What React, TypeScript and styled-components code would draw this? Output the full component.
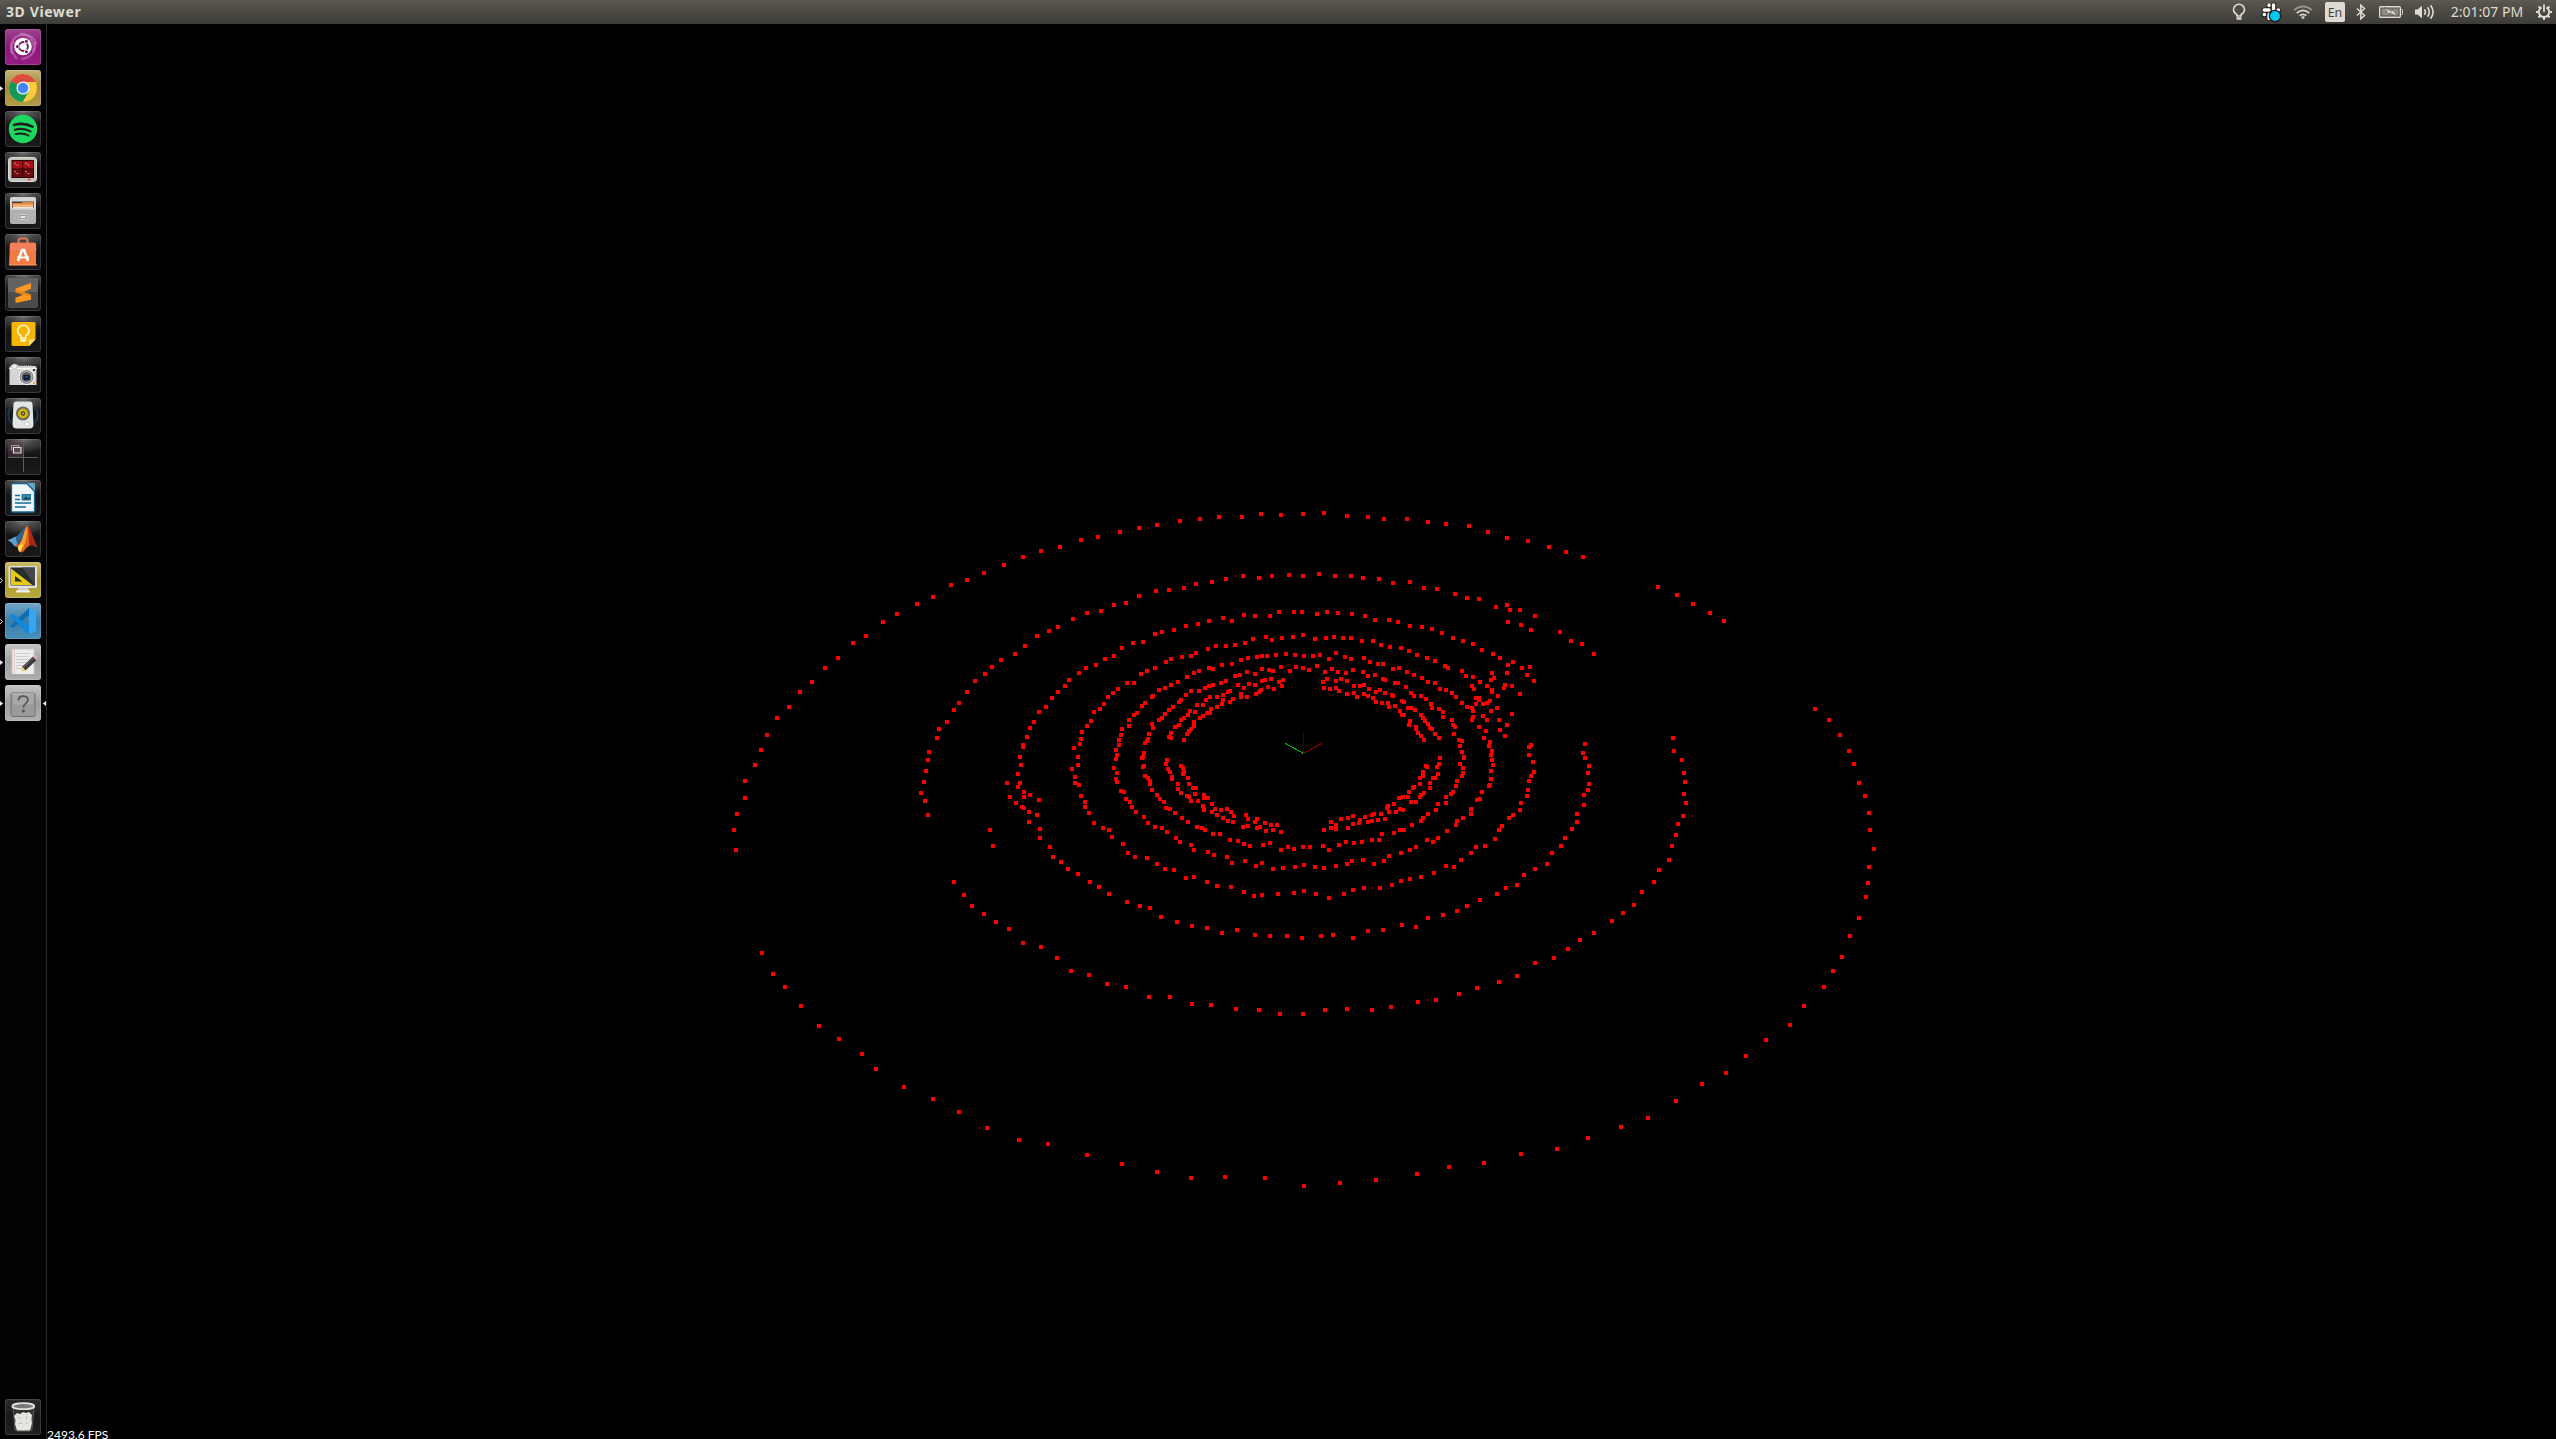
import React from "react";
import styled, { createGlobalStyle } from "styled-components";

const GlobalStyle = createGlobalStyle`
  html, body { margin: 0; padding: 0; background: #000; overflow: hidden; }
  * { box-sizing: border-box; }
`;

const Desktop = styled.div`
  display: flex;
  flex-direction: column;
  width: 2556px;
  height: 1439px;
  background: #000;
  font-family: "Noto Sans", "Open Sans", sans-serif;
`;

const TopPanel = styled.header`
  display: flex;
  justify-content: space-between;
  align-items: center;
  flex: none;
  height: 24px;
  padding: 0 4px 0 6px;
  background: linear-gradient(#5e5b50 0, #56544b 3px, #3d3c38 100%);
  color: #dfdbd2;
`;

const WindowTitle = styled.span`
  font-family: "Noto Sans", sans-serif;
  font-weight: 700;
  font-size: 14px;
  line-height: 24px;
  letter-spacing: 0.6px;
`;

const Indicators = styled.div`
  display: flex;
  align-items: center;
  height: 24px;
`;

const Slot = styled.div<{ $width: number; $gap: number }>`
  display: flex;
  align-items: center;
  justify-content: center;
  width: ${(p) => p.$width}px;
  height: 24px;
  margin-left: ${(p) => p.$gap}px;
  svg { display: block; overflow: visible; }
`;

const Keyboard = styled.span`
  width: 20px;
  height: 20px;
  border-radius: 2px;
  background: #dfdbd2;
  color: #45433e;
  font-size: 12.5px;
  line-height: 21px;
  text-align: center;
`;

const Clock = styled.span`
  font-size: 14px;
  line-height: 24px;
  white-space: nowrap;
`;

const Workspace = styled.div`
  display: flex;
  flex: 1;
  min-height: 0;
`;

const Launcher = styled.nav`
  display: flex;
  flex-direction: column;
  justify-content: space-between;
  width: 47px;
  padding: 5px 0 4px;
  background: #030103;
  border-right: 1px solid #2b2a2b;
`;

const LauncherList = styled.div`
  display: flex;
  flex-direction: column;
  gap: 5px;
`;

const LauncherRow = styled.div`
  display: grid;
  grid-template-columns: 5px 36px 5px;
  align-items: center;
  height: 36px;
  svg { display: block; }
`;

const EndMark = styled.span`
  display: flex;
  justify-content: flex-end;
`;

const Tile = styled.div<{ $fill: string }>`
  width: 36px;
  height: 36px;
  border-radius: 3px;
  background: ${(p) => p.$fill};
  box-shadow: inset 0 0 0 1px rgba(255, 255, 255, 0.13);
`;

const Viewer = styled.main`
  display: flex;
  flex-direction: column;
  justify-content: flex-end;
  flex: 1;
  background: #000;
`;

const Scene = styled.svg`
  display: block;
  flex: none;
  width: 2509px;
  height: 1402px;
`;

const FrameRate = styled.div`
  flex: none;
  height: 13px;
  color: #fff;
  font-family: Lato, sans-serif;
  font-size: 12px;
  line-height: 17px;
  white-space: nowrap;
`;

/* ---------- point cloud ---------- */

type Sector = { x: number; y: number; sx: number; sy: number; points: string };

const sectors: Sector[] = [
  {
    x: 720, y: 500, sx: 3, sy: 3,
    points: `1200,96 1134,111 1083,120 1020,141 963,153 909,171 852,195 792,219 741,240 693,255 639,291 591,312 531,342 489,366 438,408 399,429 354,474 315,504 276,546 240,576 207,621 171,654 141,705 123,750 105,795 75,843 75,894 51,942 42,990 48,1050
    1218,309 1182,315 1143,333 1101,339 1059,357 1014,381 987,393 951,408 915,438 885,462 843,480 816,501 795,522 765,543 741,576 717,609 702,630 681,666 657,687 651,714 627,756 624,780 618,813 612,846 603,879 615,903 624,945
    1206,444 1182,468 1155,477 1128,495 1098,504 1077,519 1047,540 1035,558 1014,576 996,594 978,621 957,636 942,666 930,684 921,711 909,735 909,741 900,771 903,795 894,822 900,849 894,861 861,849 912,876 912,891 930,885 957,900 870,891 888,909 906,921 912,924 927,936 951,945 927,966 960,987 960,1014 990,1041 999,1071 810,990 819,1038
    1221,549 1194,567 1179,579 1164,591 1152,612 1140,627 1122,636 1113,663 1101,678 1086,696 1083,717 1080,732 1062,744 1074,771 1074,795 1056,807 1065,831 1065,849 1077,855 1083,888 1095,906 1095,921 1107,939 1122,969 1149,984 1167,990 1176,1011 1209,1032 1224,1059
    1227,660 1227,678 1206,687 1203,705 1197,720 1197,735 1188,750 1191,765 1188,777 1182,804 1191,819 1188,837 1191,846 1203,873 1212,876 1218,897 1230,906`,
  },
  {
    x: 1130, y: 500, sx: 3, sy: 3,
    points: `27,84 81,75 150,63 210,57 267,51 336,51 393,42 453,45 519,42 582,39 651,48 714,51 762,57 831,57 894,66 948,72 1017,78 1074,96 1131,114 1194,123 1257,141 1308,156
    27,288 78,273 117,270 162,264 198,252 246,246 288,237 339,228 387,234 426,228 477,225 519,228 567,222 615,228 663,228 699,234 747,237 789,249 840,246 882,264 921,267 975,282 1011,294 1047,297 1098,321 1131,315 1140,330 1170,330 1215,348 1134,366 1173,375 1203,390 1290,396
    9,429 39,426 75,402 96,396 132,390 168,378 204,372 237,363 279,354 306,363 342,345 375,348 420,348 447,336 492,336 516,336 561,342 591,336 624,339 666,342 705,348 735,360 777,360 804,366 840,378 876,381 906,387 936,399 969,414 999,423 1029,432 1056,450 1089,462 1110,474 1149,486 1134,495 1176,504 1200,501 1191,525 1212,543 1131,519
    12,549 33,522 51,513 75,504 108,486 123,477 156,471 183,468 198,459 234,447 258,438 288,438 315,435 345,429 369,417 408,411 426,420 456,414 489,411 519,405 555,417 588,414 612,411 639,414 663,414 696,423 729,423 753,435 780,441 813,444 837,453 861,465 891,474 915,483 945,498 954,504 996,513 1008,528 1029,531 1050,546 1071,558 1086,570 1086,576 1104,588 1086,519 1092,534 1083,540 1125,555 1122,564 1146,558 1170,582 1026,558 1032,567 1038,594 1047,594 1047,600 1038,612 1059,612 1071,609 1080,603 1026,624 1029,633 1083,633 1101,624 1146,642 1059,648 1029,651 1026,660 1071,660 1107,660 1047,681 1068,693 1110,690 1131,675 1125,708 1062,714 1080,726 1077,738 1086,753 1083,765 1086,780 1089,795 1083,813 1083,837 1080,855 1077,858 1056,876 1050,897 1041,900 1023,927 1023,942 999,954 981,963 978,975 951,993 924,1014 909,1026 891,1020 858,1041 840,1050 813,1059 777,1068
    12,645 21,639 36,618 45,609 66,591 69,588 87,570 105,564 123,555 144,546 171,531 192,519 207,513 237,504 249,507 276,495 306,492 333,480 354,474 381,471 396,468 411,468 438,465 468,462 495,465 522,468 549,468 570,465 597,477 618,459 645,471 663,477 702,474 720,486 744,492 759,492 789,507 807,504 831,516 852,525 876,534 894,546 915,549 930,567 948,570 966,579 978,591 996,609 1011,621
    66,672 69,684 57,702 54,717 51,723 45,729 42,759 39,771 36,774 42,798 39,801 45,828 54,834 60,843 60,852 66,870 81,885 90,897 102,906 108,924 120,927 135,939 156,954 174,966 201,981 216,984 225,990 249,1002 270,1002 300,1020 324,1023 342,1032 360,1038 399,1035 420,1029 453,1050 474,1041 492,1047 519,1041 540,1041 579,1038 597,1050 627,1035 648,1026 672,1029 696,1026 726,1020 747,1020 756,1002 792,999 810,990 822,990 846,975 873,963 879,954 894,942 918,930 924,912 948,909 948,891 963,882 969,876 978,858 981,843 996,828 999,819 999,804 990,792 1002,774 1002,771 996,756 990,738 996,723 987,720 972,702 975,681 969,675 966,660 939,651 939,636 927,627 906,624 903,612 888,597 873,588 852,588 843,579 828,561 804,549 795,549 765,540 759,537 735,525 714,528 699,516 669,510 648,519 624,516 606,507 585,516 561,498 537,510 519,504 498,501 480,513 453,501 429,513 417,510 396,507 375,522 351,516 330,525 315,528 288,543 273,549 249,555 237,558 225,564 207,573 183,573 168,585 153,600 147,606 129,621 117,630 105,642 96,654 87,660
    459,540 447,546 456,558 432,567 414,561 423,537 405,540 396,543 375,555 357,552 342,564 324,555 393,570 387,576 378,582 351,591 333,591 333,582 309,597 300,606 300,573 294,576 279,585 261,591 240,591 228,600 219,615 201,615 279,600 276,612 261,621 243,627 240,639 231,639 219,648 210,654 195,636 180,633 174,645 162,654 153,660 147,675 135,681 123,699 117,711 123,714 192,666 192,678 183,687 177,693 171,702 162,720
    579,546 591,537 618,543 633,537 651,543 672,558 690,558 702,555 717,567 738,576 750,570 765,579 786,585 789,588 816,603 822,606 834,624 843,624 855,630 873,645 879,654 885,663 894,672 900,684 906,687 915,702 927,714 582,564 600,567 618,564 627,573 651,582 672,579 681,591 702,582 714,588 729,594 738,606 756,609 774,609 777,621 795,618 810,633 816,645 822,645 840,663 837,675 858,681 858,687 864,699 873,708 882,720
    111,780 108,792 114,807 120,816 126,831 126,837 144,852 144,867 153,879 171,888 177,891 183,903 204,903 195,882 219,918 222,930 246,936 261,945 279,954 294,963 309,966 339,981 354,978 381,984 390,981 408,993 429,990 453,996 153,798 159,804 162,816 159,822 174,834 177,852 189,864 198,864 222,885 222,894 234,894 246,912 255,927 273,930 291,927 303,936 312,948 348,945 354,957 375,966 381,957 405,969 423,975 441,975
    582,990 603,984 603,966 618,975 618,987 633,957 654,954 669,948 654,984 669,972 687,969 690,960 705,951 726,945 732,942 753,942 714,966 726,963 744,960 765,957 777,936 771,924 774,918 792,912 798,936 810,927 819,930 807,894 819,891 834,891 837,876 843,906 858,906 849,864 852,861 870,852 870,834 879,828 879,816 891,801 888,798 870,891 873,885 882,879 900,864 900,849 909,834 915,834 924,822 921,801 927,792 930,774
    6,921 18,936 42,951 54,969 75,981 96,984 111,996 138,1014 150,1026 183,1035 192,1050 234,1056 252,1065 291,1071 15,1071 51,1074
    1203,735 1197,741 1197,765 1209,786 1212,816 1203,828 1197,843 1194,870 1191,888 1173,909 1170,930 1149,945 1137,954 1116,978 1107,990 1095,1017 1065,1038 1038,1041 1023,1059 1305,1014 1293,1038 1266,1059`,
  },
  {
    x: 1540, y: 540, sx: 3, sy: 3,
    points: `129,51 354,141 411,165 459,192 510,219 552,243 93,303 126,312 162,342 825,507 867,540 900,585 927,633 942,672 957,729 975,768 987,819 990,870 1002,927 987,981 984,1029 978,1071 957,1134 930,1188 906,1251 879,1293 852,1341
    399,594 402,633 426,660 432,699 435,726 432,762 438,789 429,828 414,852 408,885 396,918 387,960 357,990 342,1026 306,1056 282,1095 249,1119 216,1143 162,1179 120,1200 84,1227 42,1254
    135,612 129,639 135,654 147,678 144,699 147,732 144,750 132,765 132,795 111,822 111,846 96,867 21,972`,
  },
  {
    x: 720, y: 850, sx: 2.8, sy: 3,
    points: `954,36 974,57 1002,72 1036,96 1061,111 1089,132 1139,156 1176,168 1204,174 1234,201 1279,216 1321,228 1363,234 1405,249 1447,240 1498,255 1540,258
    1223,42 1246,57 1271,60 1304,84 1327,81 1363,96 1391,108 1430,111 1467,126 1495,138 1517,135 1433,39 1470,33 1500,48 1517,39
    655,96 683,135 705,168 739,192 772,216 809,237 848,279 898,291 943,324 982,363 1033,375 1083,402 1136,411 1201,441 1260,441 1321,462 1374,465 1444,477 1509,480
    117,309 148,372 182,411 226,468 277,528 333,567 397,612 436,657 515,711 596,747 669,786 747,834 837,870 918,882 1027,915 1125,942 1223,966 1318,984 1413,981 1525,984`,
  },
  {
    x: 1270, y: 850, sx: 2.529, sy: 3,
    points: `8,57 33,54 63,51 86,45 114,51 137,54 167,48 195,42 207,33 235,30 263,42 288,33
    20,132 61,129 86,123 116,132 149,144 187,132 210,120 238,114 278,114 308,105 331,93 354,87 382,81 415,69 445,48 465,51 483,30
    43,258 81,264 129,258 159,255 210,264 248,243 286,240 334,225 369,231 400,204 437,195 473,183 498,168 531,150 574,132 597,114 625,105 642,75 670,57
    25,492 83,492 139,480 195,477 258,480 306,471 374,456 420,450 478,432 523,414 579,396 625,378 670,339
    86,1008 177,999 268,990 372,972 453,951 541,939 635,912 726,897 804,864 888,831 956,804 1027,753 1092,702 1153,669 1204,618 1254,570 1315,525 1350,468`,
  },
];

const POINT_SIZE = 4;

const cloudPath = sectors
  .map((s) =>
    s.points
      .trim()
      .split(/\s+/)
      .map((pair) => {
        const [px, py] = pair.split(",").map(Number);
        const x = Math.round(s.x + px / s.sx) - POINT_SIZE / 2;
        const y = Math.round(s.y + py / s.sy) - POINT_SIZE / 2;
        return `M${x} ${y}h${POINT_SIZE}v${POINT_SIZE}h-${POINT_SIZE}z`;
      })
      .join("")
  )
  .join("");

const PointCloud = () => (
  <Scene viewBox="47 24 2509 1402" shapeRendering="crispEdges">
    <path d="M1303.5 753.5L1285.5 743.5" stroke="#00b400" />
    <path d="M1303.5 753.5L1321.5 743.5" stroke="#a80000" />
    <path d="M1303.5 732v21" stroke="#0000b8" />
    <path d={cloudPath} fill="#f00" />
  </Scene>
);

/* ---------- launcher artwork ---------- */

const dark =
  "radial-gradient(ellipse 24px 14px at 50% 0, #737373 0, #484848 45%, rgba(40,40,40,0) 100%), linear-gradient(#363636 0, #151415 45%, #1b1a1c 100%)";
const grey = "linear-gradient(#c4c4c4, #9f9f9f 50%, #b0b0b0)";

const art: Record<string, React.ReactNode> = {
  dash: (
    <>
      <g fill="none" stroke="#d9a7d2" strokeOpacity=".4" strokeWidth="2.2">
        <path d="M7 25C3 13 10 5 20 6c6 0 10 4 11 9" />
        <path d="M12 30c-5-5-7-12-3-18" />
        <path d="M15 5c9-1 16 8 13 18" />
        <path d="M30 13c2 9-4 16-14 17" />
      </g>
      <circle cx="18" cy="17.5" r="8.8" fill="#fff" />
      <circle cx="18.4" cy="17.5" r="4.5" fill="none" stroke="#6b1a5c" strokeWidth="1.9" />
      <circle cx="12.6" cy="17.5" r="2.2" fill="#fff" />
      <circle cx="21.2" cy="12.6" r="2.2" fill="#fff" />
      <circle cx="21.2" cy="22.4" r="2.2" fill="#fff" />
      <circle cx="12.4" cy="17.5" r="1.5" fill="#6b1a5c" />
      <circle cx="21.4" cy="12.3" r="1.5" fill="#6b1a5c" />
      <circle cx="21.4" cy="22.7" r="1.5" fill="#6b1a5c" />
    </>
  ),
  chrome: (
    <>
      <circle cx="18" cy="18" r="14" fill="#fdc83b" />
      <path d="M18 18L5.9 11A14 14 0 0 0 17.7 32l6.2-10.7z" fill="#129b58" />
      <path d="M18 18L5.9 11A14 14 0 0 1 30.7 12H18z" fill="#dc4b3e" />
      <circle cx="18" cy="18" r="6.6" fill="#e9edf5" />
      <circle cx="18" cy="18" r="5.2" fill="#4285f4" />
    </>
  ),
  spotify: (
    <>
      <circle cx="18" cy="18" r="14.2" fill="#1ed760" />
      <g fill="none" stroke="#17201a" strokeLinecap="round">
        <path d="M9 14c6-1.8 13-1.2 18.5 1.7" strokeWidth="2.6" />
        <path d="M9.8 18.8c5-1.5 11-.9 15.7 1.6" strokeWidth="2.2" />
        <path d="M10.6 23.2c4.3-1.2 9-.7 13 1.4" strokeWidth="1.8" />
      </g>
    </>
  ),
  terminator: (
    <>
      <rect x="3.5" y="5.5" width="28" height="24" rx="3" fill="#c3c3bd" stroke="#deded9" />
      <rect x="6.5" y="8" width="22.5" height="18" fill="#2a0505" />
      <path d="M7.5 9h9.8v7.5H7.5zM18.2 9H28v7.5h-9.8z" fill="#a60f16" />
      <path d="M7.5 17.5h9.8V25H7.5zM18.2 17.5H28V25h-9.8z" fill="#6f080b" />
      <path d="M9 11l2 1M11.5 13h2M20 11l2 1M22.5 13h2M9 19l2 1M11.5 21.5h2M20 19l2 1M22.5 21.5h2" stroke="#f2a4a4" strokeWidth=".8" />
      <path d="M23 27.5h2.500" stroke="#e33" strokeWidth="1.6" />
    </>
  ),
  files: (
    <>
      <path d="M5 6q0-2 2-2h22q2 0 2 2v11H5z" fill="#d4d4d4" />
      <path d="M7 8.5h22V17H7z" fill="#403b36" />
      <path d="M7.5 10h9l1-1h11v8h-21z" fill="#df8a4a" />
      <path d="M8 11.5h20V17H8z" fill="#f4b276" />
      <path d="M8 14h20v3H8z" fill="#eee3d6" />
      <path d="M5 15.5h26V29q0 2-2 2H7q-2 0-2-2z" fill="#b0b0b0" />
      <path d="M5.5 16h25" stroke="#e4e4e4" />
      <rect x="13.5" y="21.5" width="9" height="5" rx="1" fill="#999" stroke="#d0d0d0" />
      <path d="M15.500 24h5" stroke="#fff" strokeWidth="1.5" />
    </>
  ),
  software: (
    <>
      <path d="M13.5 11V7q0-2.5 2.5-2.5h4q2.500 0 2.500 2.500v4" fill="none" stroke="#e0735a" strokeWidth="2.2" />
      <path d="M5 9.5l2-1h22l2 1V31H4z" fill="#f37a3f" />
      <path d="M5 9.5h26l.4 7H4.6z" fill="#f0805b" />
      <path d="M4 31h28" stroke="#ffa46e" />
      <path d="M13 27l4-11h2l4 11" fill="none" stroke="#fff" strokeWidth="2.6" />
      <path d="M12 23.5h12" stroke="#fff" strokeWidth="2" />
    </>
  ),
  sublime: (
    <>
      <rect x="3" y="3" width="30" height="30" rx="2" fill="#4b4b4b" />
      <path d="M3 3h30v14H3z" fill="#626262" />
      <path d="M10.500 13.500L26 8v5.500L18.500 17 26 19.500v5.300L10.500 28v-5.300l7.500-3-7.500-2.400z" fill="#ff9820" />
      <path d="M16 16.300l10 3.200v2l-15.500-4.200v-2.500z" fill="#e88215" />
    </>
  ),
  keep: (
    <>
      <path d="M6.500 7.500q0-1.500 1.500-1.500h21q1.500 0 1.500 1.500V23l-6.500 7H8q-1.500 0-1.500-1.500z" fill="#f6b500" />
      <path d="M24 23.500h6.500L24 30z" fill="#ffe083" />
      <path d="M15.800 22v-2.400c-2-1-3.200-2.700-3.200-4.600a5.700 5.700 0 0 1 11.400 0c0 1.900-1.200 3.600-3.200 4.600V22z" fill="none" stroke="#fff8df" strokeWidth="1.500" />
      <path d="M15.500 24.500h5.700" stroke="#fff8df" strokeWidth="2.500" />
    </>
  ),
  camera: (
    <>
      <path d="M6 9q0-1.500 1.500-1.500h5L14 9h16q1.500 0 1.500 1.500V28h-27V10z" fill="#d5d5d5" />
      <path d="M4 11.500h28" stroke="#f6f6f6" />
      <path d="M15 8.500h11" stroke="#8d8d8d" strokeDasharray="1 1" />
      <circle cx="9.500" cy="9.500" r="2.500" fill="#eee" stroke="#aaa" strokeWidth=".6" />
      <circle cx="21.500" cy="20" r="7.600" fill="#858585" stroke="#f3f3f3" strokeWidth="1.200" />
      <circle cx="21.500" cy="20" r="5.300" fill="#555" stroke="#c4c4c4" strokeWidth="1" />
      <rect x="18.500" y="18" width="6" height="5" fill="#0a1d3c" />
      <path d="M20 20h3" stroke="#3e72a5" />
      <path d="M28 12h2v2h-2z" fill="#333" />
      <path d="M28 25h2v2h-2z" fill="#f0a238" />
    </>
  ),
  speaker: (
    <>
      <path d="M5 10q-4 8 1 15M31 10q4 8-1 15" fill="none" stroke="#1d3557" strokeWidth="2" />
      <path d="M8.500 6q0-2.500 3-2.500h13q3 0 3 2.500l1 20q0 4.500-4 4.500h-13q-4 0-4-4.500z" fill="#e2e5e5" />
      <circle cx="18" cy="15.500" r="7" fill="#6b6860" />
      <circle cx="18" cy="15.500" r="5" fill="#d0b90d" />
      <circle cx="18" cy="15.500" r="2.200" fill="#4d470b" />
      <circle cx="18" cy="15.500" r=".8" fill="#eee" />
      <circle cx="22" cy="26" r="2.200" fill="#fff" stroke="#bbb" strokeWidth=".7" />
    </>
  ),
  workspaces: (
    <>
      <path d="M3 3h15v15H3z" fill="#5a3c4d" fillOpacity=".5" />
      <path d="M18.500 3v30M3 18.500h30" stroke="#5f5b62" />
      <path d="M6.500 11.500v-5h7v2" fill="none" stroke="#a398a0" strokeWidth="1.200" />
      <path d="M8.500 8.500h7.500v5.500H8.500z" fill="#554650" stroke="#ddd6db" strokeWidth="1.200" />
    </>
  ),
  writer: (
    <>
      <path d="M6.500 4.500q0-1 1-1H22l7.500 8V31q0 1-1 1h-21q-1 0-1-1z" fill="#f4f7f9" stroke="#0e6a9d" strokeWidth="1.300" />
      <path d="M22 3h8v8z" fill="#67a5c8" />
      <path d="M22 3.500l7.500 8" stroke="#17618b" />
      <path d="M10 15.500h5M10 19.500h5M10 23h16M10 27h11" stroke="#126d9f" strokeWidth="1.700" />
      <rect x="17" y="14.500" width="8.500" height="5.500" fill="#348bb8" stroke="#126081" strokeWidth=".8" />
      <path d="M18 19.500l3-3 2 2 1.500-1v2z" fill="#123d57" />
    </>
  ),
  matlab: (
    <>
      <path d="M2.500 19.500l8-4 5 4-5 6c-3-1-2-4-8-6z" fill="#5aa2d0" />
      <path d="M10.500 15.500C15 14 17 7 22.500 4.500l-5 13-5 6.500z" fill="#355f91" />
      <path d="M10 25c4-2 7-4 8.500-11C19.500 9 21 5 22.500 4.500c3 1 5 14 10 22-4-3-6-3-8-2-4 2-5 7-8.500 7-2 0-2-6-6-6.500z" fill="#dd5d1e" />
      <path d="M22.500 4.500c3 1 5 14 10 22-4-3-6-3-8-2-1-6 0-14-2-20z" fill="#a9251c" />
      <path d="M22 5c1 8-1 19-6.500 25.500-1 0-1-3-2.500-5C18 20 19 10 22 5z" fill="#f7a32b" />
      <path d="M14 25q3-1 4-3-1 6-3 9-2-1-2-4z" fill="#ffe15d" />
    </>
  ),
  display: (
    <>
      <rect x="3.500" y="4" width="28.500" height="22" rx="1.500" fill="#e0e0dc" />
      <rect x="5.500" y="5.500" width="24.500" height="18" fill="#272d2d" />
      <path d="M17 5.500h13v17z" fill="#424849" />
      <path d="M6 6.500l21.500 16.500H6z" fill="#e6ca12" />
      <path d="M10 14v5.500h7.500z" fill="#282b25" />
      <path d="M13 26h10l1 3H12z" fill="#cfcfca" />
      <rect x="11" y="28.500" width="14" height="2" rx="1" fill="#f4f4ef" />
    </>
  ),
  vscode: (
    <>
      <path d="M5 13l3-2 19 15-3 5z" fill="#0a77c8" />
      <path d="M5 23l19-18 3 5L8 25z" fill="#0d6eb4" />
      <path d="M5 13l3-2 16 13v6.500z" fill="#1089de" />
      <path d="M24 5l7 3.500v19.500l-7 3z" fill="#33a6f5" />
    </>
  ),
  editor: (
    <>
      <path d="M7 5h22v26H7z" fill="#ededed" stroke="#c6c6c6" />
      <path d="M6 31h24" stroke="#868686" />
      <path d="M9.500 5v25" stroke="#ecb6b6" strokeWidth=".7" />
      <path d="M11 9.500h14M11 12.500h12M11 15.500h13M11 18.500h10M11 21.500h8M11 24.500h6" stroke="#ccc" strokeWidth="1" />
      <path d="M17 23L28 12.500l3.500 3.500-11 10.500z" fill="#3a3838" />
      <path d="M18.500 23.500L29 13.500" stroke="#777" />
      <path d="M16 27.500l1.500-4.500 3 3.500z" fill="#ead85c" />
      <path d="M28 12.500l1.500-1.500q2 1 3 3.500L31 16z" fill="#e8a7ce" />
    </>
  ),
  unknown: (
    <>
      <rect x="6" y="8" width="24" height="23.500" rx="2" fill="#9b9b9b" stroke="#6e6e6e" />
      <path d="M7 9h22" stroke="#d0d0d0" />
      <path d="M8 9.500h20v10H8z" fill="#a8a8a8" />
      <path d="M13.500 15.500c0-6 9.500-5.500 9.500-.7 0 3.700-4.700 3.700-4.700 8" fill="none" stroke="#555" strokeWidth="1.700" />
      <circle cx="18.300" cy="26" r="1.500" fill="#555" />
    </>
  ),
  trash: (
    <>
      <path d="M8 8h21l-2 22q-.200 2-2 2H12q-1.800 0-2-2z" fill="#303030" stroke="#777" strokeWidth=".7" />
      <path d="M9 17l3-3 3 1 3-2 3 1 3-1 3 3-.500 4 .500 4-1.500 6-1 1.500H12L10 25l.500-4z" fill="#e6e6e1" />
      <path d="M13 18l3 2M13 25l4-1M22 17l-1 3M23 25l-2-1" stroke="#b9bab5" fill="none" />
      <ellipse cx="18.300" cy="7.200" rx="11" ry="3" fill="#777" stroke="#dfe2df" strokeWidth="1.800" />
    </>
  ),
};

type Mark = "full" | "hollow" | undefined;
type App = { name: string; fill: string; mark?: Mark; focused?: boolean };

const apps: App[] = [
  { name: "dash", fill: "linear-gradient(#9d4590, #8a1678 50%, #961f86)" },
  { name: "chrome", fill: "linear-gradient(#c6b477, #a18a3b 45%, #b39b46)", mark: "full" },
  { name: "spotify", fill: dark },
  { name: "terminator", fill: dark },
  { name: "files", fill: dark },
  { name: "software", fill: dark },
  { name: "sublime", fill: dark },
  { name: "keep", fill: dark },
  { name: "camera", fill: dark },
  { name: "speaker", fill: dark },
  { name: "workspaces", fill: dark },
  { name: "writer", fill: dark },
  { name: "matlab", fill: dark },
  { name: "display", fill: "linear-gradient(#cabb67, #a99826 50%, #b9a942)", mark: "hollow" },
  { name: "vscode", fill: "linear-gradient(#75a8c6, #397eab 50%, #498fb9)", mark: "hollow" },
  { name: "editor", fill: grey, mark: "full" },
  { name: "unknown", fill: grey, mark: "full", focused: true },
];

const LauncherIcon = ({ app }: { app: App }) => (
  <LauncherRow>
    <span>
      {app.mark && (
        <svg width="4" height="7" viewBox="0 0 4 7">
          {app.mark === "full" ? (
            <path d="M0 1l3.200 2.500L0 6z" fill="#e8e8e8" />
          ) : (
            <path d="M0 1l2.500 2.500L0 6" fill="none" stroke="#ddd" />
          )}
        </svg>
      )}
    </span>
    <Tile $fill={app.fill}>
      <svg width="36" height="36" viewBox="0 0 36 36">
        {art[app.name]}
      </svg>
    </Tile>
    <EndMark>
      {app.focused && (
        <svg width="4" height="7" viewBox="0 0 4 7">
          <path d="M4 1L.8 3.500 4 6z" fill="#e8e8e8" />
        </svg>
      )}
    </EndMark>
  </LauncherRow>
);

/* ---------- panel indicators ---------- */

const ink = "#dfdbd2";

const BulbIcon = () => (
  <svg width="16" height="18" viewBox="0 0 16 18" fill="none" stroke={ink}>
    <path d="M5.800 13v-1.500C3.500 10 2.500 8.500 2.500 6.700a5.500 5.500 0 0 1 11 0c0 1.800-1 3.300-3.300 4.800V13z" strokeWidth="1.600" />
    <path d="M5.500 15.500h5" strokeWidth="2.500" />
  </svg>
);

const SlackIcon = () => (
  <svg width="21" height="20" viewBox="0 0 21 20">
    <g stroke="#22211f" strokeWidth="5" strokeLinecap="round">
      <path d="M8 3.500v4M3 8h5M3 13h4.500M12.500 3v5M12.500 8.200h5M8.200 13v3.500" />
    </g>
    <g stroke="#fff" strokeWidth="3.300" strokeLinecap="round">
      <path d="M8 3v.500M3.200 8H8M12.500 3v5M17 8h.500M3.200 12.500h.300M8 12.500v4" />
    </g>
    <circle cx="14" cy="14" r="5.700" fill="#00c8f5" stroke="#1e1d1b" strokeWidth="1.300" />
  </svg>
);

const WifiIcon = () => (
  <svg width="20" height="16" viewBox="0 0 20 16" fill="none">
    <path d="M1 6.200q9-7.800 18 0" stroke="#99968e" strokeWidth="1.700" />
    <path d="M3.800 9q6.200-5.200 12.400 0" stroke={ink} strokeWidth="1.700" />
    <path d="M6.600 11.700q3.400-2.800 6.800 0" stroke={ink} strokeWidth="1.700" />
    <path d="M8 13q2-1.500 4 0l-2 2.300z" fill={ink} />
  </svg>
);

const BluetoothIcon = () => (
  <svg width="10" height="16" viewBox="0 0 10 16" fill="none" stroke={ink} strokeWidth="1.500">
    <path d="M1 4.500l7.500 7-3.700 3.300V1.200l3.700 3.300-7.500 7" />
  </svg>
);

const BatteryIcon = () => (
  <svg width="24" height="12" viewBox="0 0 24 12">
    <rect x=".700" y=".700" width="20.600" height="10.600" rx="1" fill="none" stroke={ink} strokeWidth="1.400" />
    <path d="M2.500 2.500h17v7h-17z" fill="#8f8c84" />
    <path d="M22 3.500h.500q1 0 1 1v3q0 1-1 1H22" fill="none" stroke={ink} />
    <path d="M5.500 1.500l7.500 4 .800-2.300 4.500 7.200-7.500-3.600-.600 2.200z" fill={ink} stroke="#55534c" strokeWidth=".6" />
  </svg>
);

const VolumeIcon = () => (
  <svg width="20" height="16" viewBox="0 0 20 16" fill="none" stroke={ink}>
    <path d="M0 5.500h2.500L7 1.800v12.400l-4.500-3.700H0z" fill={ink} stroke="none" />
    <path d="M9.500 5.200q2 2.800 0 5.600M12.500 3.200q3.600 4.800 0 9.600M15.500 1.200q5.200 6.800 0 13.600" strokeWidth="1.600" />
  </svg>
);

const SessionIcon = () => (
  <svg width="16" height="16" viewBox="0 0 16 16" fill="none" stroke={ink}>
    <path d="M5.600 3.300a5.200 5.200 0 1 0 4.800 0" strokeWidth="2" />
    <path d="M8 .500v7.500" strokeWidth="1.800" />
    <path d="M2.500 2.500l2 2M13.500 2.500l-2 2M0 8h3M13 8h3M2.500 13.500l2-2M13.500 13.500l-2-2M8 13v3" strokeWidth="2" />
  </svg>
);

export default function App() {
  return (
    <Desktop>
      <GlobalStyle />
      <TopPanel>
        <WindowTitle>3D Viewer</WindowTitle>
        <Indicators>
          <Slot $width={16} $gap={0}><BulbIcon /></Slot>
          <Slot $width={21} $gap={14}><SlackIcon /></Slot>
          <Slot $width={20} $gap={11}><WifiIcon /></Slot>
          <Slot $width={20} $gap={12}><Keyboard>En</Keyboard></Slot>
          <Slot $width={10} $gap={11}><BluetoothIcon /></Slot>
          <Slot $width={24} $gap={13}><BatteryIcon /></Slot>
          <Slot $width={20} $gap={12}><VolumeIcon /></Slot>
          <Slot $width={72} $gap={16}><Clock>2:01:07 PM</Clock></Slot>
          <Slot $width={16} $gap={13}><SessionIcon /></Slot>
        </Indicators>
      </TopPanel>
      <Workspace>
        <Launcher>
          <LauncherList>
            {apps.map((app) => (
              <LauncherIcon key={app.name} app={app} />
            ))}
          </LauncherList>
          <LauncherIcon app={{ name: "trash", fill: "linear-gradient(#2c2b2c, #1a191a 50%, #201f21)" }} />
        </Launcher>
        <Viewer>
          <PointCloud />
          <FrameRate>2493.6 FPS</FrameRate>
        </Viewer>
      </Workspace>
    </Desktop>
  );
}
